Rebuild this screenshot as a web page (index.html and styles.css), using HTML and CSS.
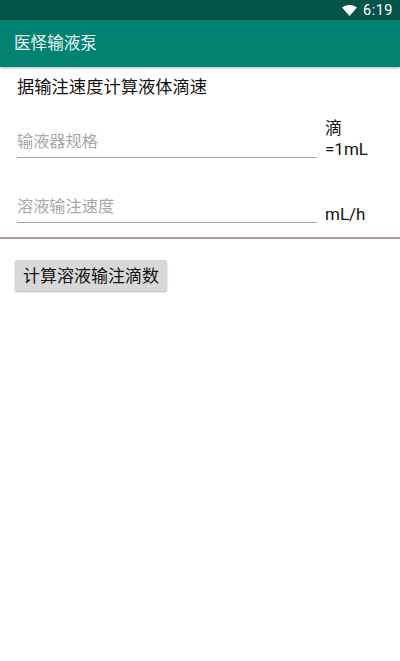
FILE: index.html
```html
<!DOCTYPE html>
<html lang="zh-CN">
<head>
<meta charset="UTF-8">
<meta name="viewport" content="width=device-width, initial-scale=1.0">
<title>医怿输液泵</title>
<link rel="stylesheet" href="styles.css">
</head>
<body>

<!-- Status bar -->
<div class="status-bar">
    <svg class="wifi-icon" width="15" height="11" viewBox="0 0 15 11"><path d="M0 2.600C2 .9 4.600 0 7.500 0s5.500.9 7.500 2.600L7.500 11z" fill="#fff"/></svg>
    <span class="clock">6:19</span>
</div>

<!-- Toolbar -->
<div class="toolbar">医怿输液泵</div>

<div class="content">
    <div class="page-title">据输注速度计算液体滴速</div>

    <div class="form-row first-row">
        <div class="field"><span class="hint">输液器规格</span></div>
        <div class="unit">滴<br>=1mL</div>
    </div>

    <div class="form-row second-row">
        <div class="field"><span class="hint">溶液输注速度</span></div>
        <div class="unit">mL/h</div>
    </div>

    <div class="divider"></div>

    <button class="calc-btn" type="button">计算溶液输注滴数</button>
</div>

</body>
</html>
```

FILE: styles.css
```css
* {
    box-sizing: border-box;
}

html, body {
    height: 100%;
}

body {
    margin: 0;
    background-color: #ffffff;
    color: #111111;
    font-family: Roboto, "Noto Sans CJK SC", sans-serif;
    overflow: hidden;
}

.status-bar {
    height: 20px;
    background-color: #04544a;
    color: #ffffff;
    display: flex;
    align-items: center;
    justify-content: flex-end;
    padding-right: 7px;
}

.wifi-icon {
    margin-right: 6px;
}

.clock {
    font-size: 14.5px;
    letter-spacing: 0.5px;
    margin-top: 1px;
}

.toolbar {
    height: 47px;
    background-color: #028270;
    color: #e8f5f2;
    font-size: 16.6px;
    line-height: 47px;
    padding-left: 14px;
    box-shadow: 0 1px 3px rgba(0, 0, 0, 0.3);
}

.content {
    display: flex;
    flex-direction: column;
}

.page-title {
    font-size: 17.3px;
    line-height: 24px;
    margin-top: 8px;
    padding-left: 17px;
}

.form-row {
    display: flex;
    padding-left: 17px;
}

.first-row {
    margin-top: 10px;
    height: 58px;
}

.second-row {
    margin-top: 7px;
    height: 63px;
}

.field {
    width: 300px;
    height: 49px;
    border-bottom: 1px solid #a5a5a5;
    display: flex;
    align-items: center;
    padding-top: 13px;
}

.hint {
    font-size: 16.2px;
    color: #a8a8a8;
}

.unit {
    margin-left: 8px;
    font-size: 17px;
    line-height: 21px;
}

.first-row .unit {
    padding-top: 9px;
}

.second-row .unit {
    padding-top: 30px;
}

.divider {
    height: 2px;
    background-color: #b89a9a;
}

.calc-btn {
    align-self: flex-start;
    width: 152px;
    height: 31px;
    margin-top: 21px;
    margin-left: 15px;
    padding: 0 0 2px;
    border: none;
    border-radius: 2px;
    background-color: #d8d8d8;
    color: #111111;
    font-family: inherit;
    font-size: 17px;
    box-shadow: 0 1px 2px rgba(0, 0, 0, 0.3);
}
```
